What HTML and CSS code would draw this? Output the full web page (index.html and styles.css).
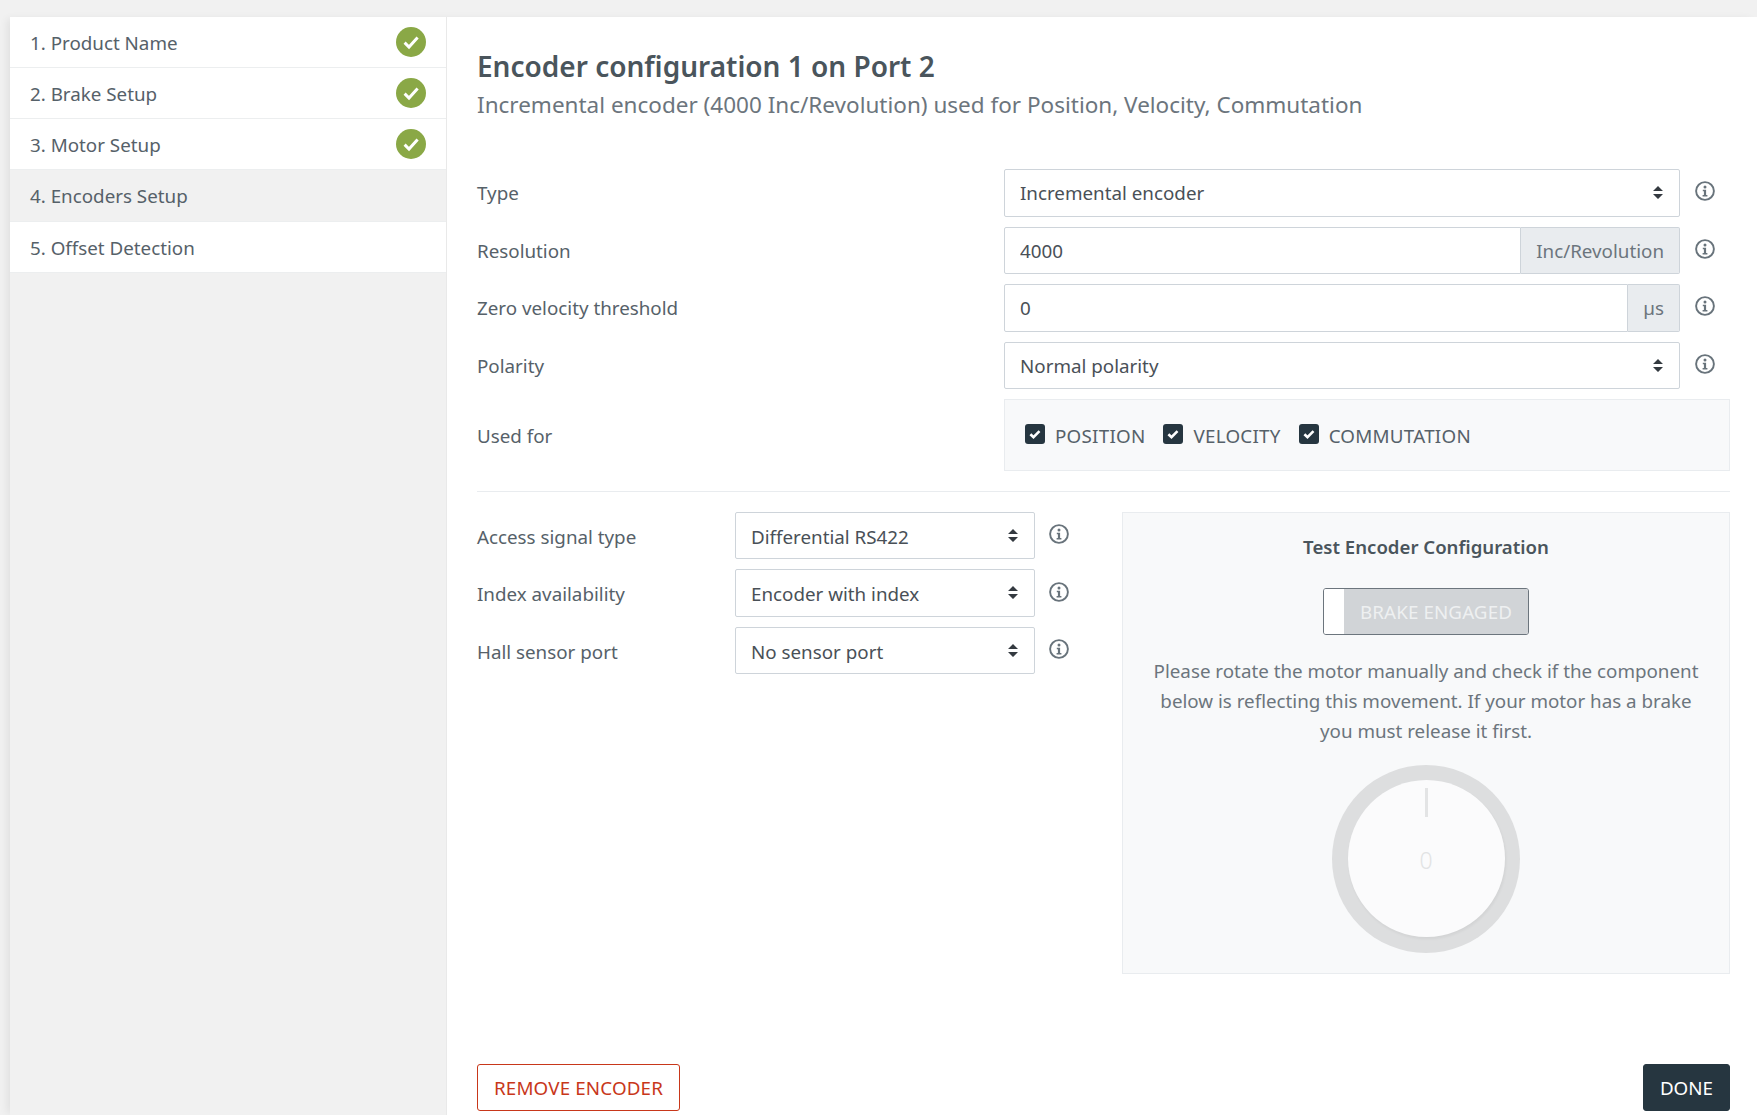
FILE: index.html
```html
<!DOCTYPE html>
<html lang="en">
<head>
    <meta charset="UTF-8">
    <meta name="viewport" content="width=device-width, initial-scale=1.0">
    <title>Encoder configuration</title>
    <link rel="stylesheet" href="styles.css">
</head>
<body>
    <svg class="defs" width="0" height="0">
        <symbol id="info" viewBox="0 0 20 20">
            <circle cx="10" cy="10" r="8.9" fill="none" stroke="currentColor" stroke-width="1.9"/>
            <circle cx="10" cy="5.9" r="1.5" fill="currentColor"/>
            <path d="M7.8 8.7h3.3v5.2h1.3v1.6H7.6v-1.6h1.3v-3.6H7.8z" fill="currentColor"/>
        </symbol>
        <symbol id="done" viewBox="0 0 30 30">
            <circle cx="15" cy="15" r="15" fill="#8aa846"/>
            <path d="M8.6 15.6l4.4 4.4 8.6-9.4" fill="none" stroke="#fff" stroke-width="3"/>
        </symbol>
        <symbol id="tick" viewBox="0 0 20 20">
            <path d="M5.4 10.2l3.1 3 6-6" fill="none" stroke="#fff" stroke-width="2.6"/>
        </symbol>
    </svg>
    <div class="app">
        <nav class="sidebar">
            <div class="step">1. Product Name <svg class="step-ok"><use href="#done"/></svg></div>
            <div class="step">2. Brake Setup <svg class="step-ok"><use href="#done"/></svg></div>
            <div class="step">3. Motor Setup <svg class="step-ok"><use href="#done"/></svg></div>
            <div class="step active">4. Encoders Setup</div>
            <div class="step">5. Offset Detection</div>
        </nav>
        <main class="main">
            <h1>Encoder configuration 1 on Port 2</h1>
            <p class="subtitle">Incremental encoder (4000 Inc/Revolution) used for Position, Velocity, Commutation</p>

            <div class="row">
                <label class="row-label">Type</label>
                <div class="control"><select class="form-select"><option>Incremental encoder</option></select></div>
                <svg class="info"><use href="#info"/></svg>
            </div>
            <div class="row">
                <label class="row-label">Resolution</label>
                <div class="control input-group"><input class="form-input" type="text" value="4000"><span class="unit">Inc/Revolution</span></div>
                <svg class="info"><use href="#info"/></svg>
            </div>
            <div class="row">
                <label class="row-label">Zero velocity threshold</label>
                <div class="control input-group"><input class="form-input" type="text" value="0"><span class="unit">µs</span></div>
                <svg class="info"><use href="#info"/></svg>
            </div>
            <div class="row">
                <label class="row-label">Polarity</label>
                <div class="control"><select class="form-select"><option>Normal polarity</option></select></div>
                <svg class="info"><use href="#info"/></svg>
            </div>
            <div class="row used-row">
                <label class="row-label">Used for</label>
                <div class="used-box">
                    <span class="check"><svg class="check-box"><use href="#tick"/></svg>POSITION</span>
                    <span class="check"><svg class="check-box"><use href="#tick"/></svg>VELOCITY</span>
                    <span class="check"><svg class="check-box"><use href="#tick"/></svg>COMMUTATION</span>
                </div>
            </div>

            <hr class="divider">

            <div class="lower">
                <div class="lower-form">
                    <div class="row">
                        <label class="row-label short">Access signal type</label>
                        <div class="control small"><select class="form-select"><option>Differential RS422</option></select></div>
                        <svg class="info"><use href="#info"/></svg>
                    </div>
                    <div class="row">
                        <label class="row-label short">Index availability</label>
                        <div class="control small"><select class="form-select"><option>Encoder with index</option></select></div>
                        <svg class="info"><use href="#info"/></svg>
                    </div>
                    <div class="row">
                        <label class="row-label short">Hall sensor port</label>
                        <div class="control small"><select class="form-select"><option>No sensor port</option></select></div>
                        <svg class="info"><use href="#info"/></svg>
                    </div>
                </div>
                <section class="test-panel">
                    <h2>Test Encoder Configuration</h2>
                    <div class="brake"><span class="brake-knob"></span><span class="brake-label">BRAKE ENGAGED</span></div>
                    <p>Please rotate the motor manually and check if the component below is reflecting this movement. If your motor has a brake you must release it first.</p>
                    <div class="dial">
                        <div class="dial-face">
                            <span class="dial-mark"></span>
                            <span class="dial-value">0</span>
                        </div>
                    </div>
                </section>
            </div>

            <div class="actions">
                <button class="btn btn-remove">REMOVE ENCODER</button>
                <button class="btn btn-done">DONE</button>
            </div>
        </main>
    </div>
</body>
</html>
```

FILE: styles.css
```css
* { box-sizing: border-box; }
html, body { height: 100%; }
body { margin: 0; background: #f1f1f1; overflow: hidden; font-family: "Noto Sans", "Open Sans", sans-serif; font-size: 18.8px; color: #566169; }
.defs { position: absolute; }
.app { display: flex; height: 1098px; margin: 17px 0 0 10px; box-shadow: -5px 0 8px -2px rgba(0, 0, 0, 0.07); }

.sidebar { width: 437px; flex: none; background: #f1f1f1; border-right: 1px solid #e9e9e9; }
.step { display: flex; align-items: center; justify-content: space-between; height: 51px; padding: 1px 20px 0 20px; background: #fff; border-bottom: 1.5px solid #eceeef; line-height: 30px; }
.step.active { background: #f1f1f1; height: 52px; }
.step-ok { width: 30px; height: 30px; margin-top: -1px; }

.main { flex: 1; display: flex; flex-direction: column; background: #fff; padding: 29px 27px 4px 30px; }
h1 { margin: 0; font-size: 28px; line-height: 41px; font-weight: 600; color: #4a555c; }
.subtitle { margin: 0 0 46px; font-size: 22.5px; line-height: 36px; color: #6c757d; }

.row { display: flex; align-items: center; height: 47.5px; margin-bottom: 10px; }
.row-label { width: 527px; flex: none; padding-top: 1px; }
.row-label.short { width: 258px; padding-top: 3px; }
.control { width: 676px; flex: none; height: 100%; }
.control.small { width: 300px; }
.form-select, .form-input { display: block; width: 100%; height: 100%; padding: 1px 15px 0; border: 1.5px solid #ced4da; border-radius: 2px; background-color: #fff; font: inherit; color: #495057; outline: none; }
.control.small .form-select { padding-top: 3px; }
.form-select { appearance: none; background-image: url("data:image/svg+xml,%3Csvg xmlns='http://www.w3.org/2000/svg' width='10' height='13'%3E%3Cpath d='M5 0l5 5H0zM5 13L0 8h10z' fill='%23343a40'/%3E%3C/svg%3E"); background-repeat: no-repeat; background-position: right 16px center; }
.input-group { display: flex; }
.input-group .form-input { flex: 1; min-width: 0; border-radius: 2px 0 0 2px; }
.unit { display: flex; align-items: center; padding: 1px 15px 0; background: #e9ecef; border: 1.5px solid #ced4da; border-left: 0; border-radius: 0 2px 2px 0; color: #6c757d; }
.info { width: 20px; height: 20px; flex: none; margin: -3px 0 0 15px; color: #68737b; }
.lower-form .info { margin: -2.5px 0 0 14px; }

.used-row { height: 72px; margin-bottom: 19.5px; }
.used-box { display: flex; align-items: center; gap: 18px; width: 726px; height: 100%; padding-left: 20px; background: #f8f9fa; border: 1px solid #e9ecef; }
.check { display: flex; align-items: center; gap: 10px; padding-top: 1px; color: #566169; letter-spacing: 0.25px; }
.check-box { width: 20px; height: 20px; background: #263640; border-radius: 3px; margin-top: -3px; }

.divider { width: 100%; margin: 0 0 20px; border: 0; border-top: 1.5px solid #e9ecef; }

.lower { display: flex; justify-content: space-between; }
.test-panel { width: 608px; height: 462px; padding: 20px 28px 0; background: #f8f9fa; border: 1px solid #e9ecef; text-align: center; }
.test-panel h2 { margin: 0 0 27px; font-size: 18.6px; line-height: 28px; font-weight: 600; color: #4a555c; }
.test-panel p { margin: 0 0 19px; line-height: 30px; color: #6c757d; }
.brake { display: flex; width: 206px; height: 47px; margin: 0 auto 21px; border: 1.5px solid #6c757d; border-radius: 3px; overflow: hidden; }
.brake-knob { width: 20px; background: #fff; }
.brake-label { flex: 1; display: flex; align-items: center; justify-content: center; padding-top: 1px; background: #d1d4d7; color: #eef0f1; letter-spacing: 0.1px; }

.dial { display: flex; align-items: center; justify-content: center; width: 188px; height: 188px; margin: 0 auto; border-radius: 50%; background: #dddedf; }
.dial-face { position: relative; display: flex; align-items: center; justify-content: center; width: 157px; height: 157px; padding-top: 3px; border-radius: 50%; background: #fbfbfc; box-shadow: 1px 2px 3px rgba(0, 0, 0, 0.05); }
.dial-mark { position: absolute; top: 8px; left: 77px; width: 3.5px; height: 29px; background: #e3e4e5; }
.dial-value { font-size: 23px; font-weight: 300; color: #e2e3e4; }

.actions { display: flex; justify-content: space-between; margin-top: auto; }
.btn { height: 47.5px; padding: 2px 16px 0; border-radius: 3px; font: inherit; cursor: pointer; }
.btn-remove { width: 203px; padding: 2px 0 0; background: #fff; border: 1.5px solid #c8371a; color: #c8371a; letter-spacing: 0.15px; }
.btn-done { background: #263640; border: 1.5px solid #263640; color: #fff; }
```
